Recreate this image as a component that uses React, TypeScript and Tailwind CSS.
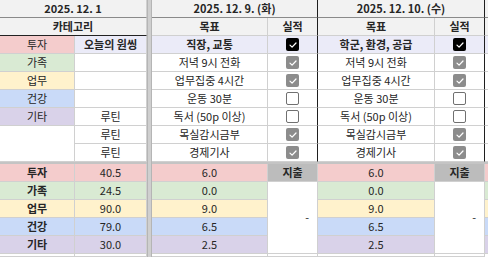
import React from 'react';

type Tone = 'pink' | 'green' | 'yellow' | 'blue' | 'purple';

const toneBg: Record<Tone, string> = {
  pink: 'bg-[#f4cccc]',
  green: 'bg-[#d9ead3]',
  yellow: 'bg-[#fff2cc]',
  blue: 'bg-[#c9daf8]',
  purple: 'bg-[#d9d2e9]',
};

const categories: { label: string; tone: Tone; total: string }[] = [
  { label: '투자', tone: 'pink', total: '40.5' },
  { label: '가족', tone: 'green', total: '24.5' },
  { label: '업무', tone: 'yellow', total: '90.0' },
  { label: '건강', tone: 'blue', total: '79.0' },
  { label: '기타', tone: 'purple', total: '30.0' },
];

const tasks: { name: string; done: boolean }[] = [
  { name: '저녁 9시 전화', done: true },
  { name: '업무집중 4시간', done: true },
  { name: '운동 30분', done: false },
  { name: '독서 (50p 이상)', done: false },
  { name: '목실감시금부', done: true },
  { name: '경제기사', done: true },
];

const dayValues = ['6.0', '0.0', '9.0', '6.5', '2.5'];

const rows = 'grid grid-rows-[18px_18px_repeat(7,18px)_2px_repeat(5,18px)_1fr] h-[257px]';
const cell = 'flex items-center justify-center border-r border-b border-[#d0d0d0] text-[11px] leading-none';

function Check({ kind }: { kind: 'black' | 'gray' | 'empty' }) {
  if (kind === 'empty') {
    return <span className="w-[13px] h-[13px] rounded-[2px] border-[1.5px] border-[#707070] bg-white" />;
  }
  return (
    <span
      className={`w-[13px] h-[13px] rounded-[2px] flex items-center justify-center ${
        kind === 'black' ? 'bg-black' : 'bg-[#8c8c8c]'
      }`}
    >
      <svg viewBox="0 0 12 12" className="w-[10px] h-[10px]">
        <path d="M2.4 6.2 L4.9 8.6 L9.6 3.6" stroke="white" strokeWidth="1.5" fill="none" strokeLinecap="round" strokeLinejoin="round" />
      </svg>
    </span>
  );
}

function LeftBlock() {
  return (
    <div className={`${rows} grid-cols-[75px_72px] w-[147px] shrink-0`}>
      <div className={`${cell} col-span-2 bg-[#f2f2f2] font-bold border-b-[#8a8a8a]`}>2025. 12. 1</div>
      <div className={`${cell} col-span-2 bg-[#f2f2f2] font-bold border-b-[#222]`}>카테고리</div>

      <div className={`${cell} ${toneBg.pink}`}>투자</div>
      <div className={`${cell} bg-[#ebebf8] font-semibold`}>오늘의 원씽</div>
      <div className={`${cell} ${toneBg.green}`}>가족</div>
      <div className={`${cell} bg-white`} />
      <div className={`${cell} ${toneBg.yellow}`}>업무</div>
      <div className={`${cell} bg-white`} />
      <div className={`${cell} ${toneBg.blue}`}>건강</div>
      <div className={`${cell} bg-white`} />
      <div className={`${cell} ${toneBg.purple}`}>기타</div>
      <div className={`${cell} bg-white`}>루틴</div>
      <div className={`${cell} row-span-2 bg-white`} />
      <div className={`${cell} bg-white`}>루틴</div>
      <div className={`${cell} bg-white`}>루틴</div>

      <div className="col-span-2 bg-[#c4c4c4]" />

      {categories.map((c) => (
        <React.Fragment key={c.label}>
          <div className={`${cell} ${toneBg[c.tone]} font-bold`}>{c.label}</div>
          <div className={`${cell} ${toneBg[c.tone]}`}>{c.total}</div>
        </React.Fragment>
      ))}

      <div className={`${cell} bg-white`} />
      <div className={`${cell} bg-white`} />
    </div>
  );
}

function DayBlock({ date, goal, wide }: { date: string; goal: string; wide?: boolean }) {
  const dark = 'border-r-[#1f1f1f]';
  return (
    <div className={`${rows} ${wide ? 'grid-cols-[117px_50px] w-[167px]' : 'grid-cols-[116px_50px] w-[166px]'} shrink-0`}>
      <div className={`${cell} col-span-2 bg-[#f2f2f2] font-bold border-b-[#8a8a8a] ${dark}`}>{date}</div>
      <div className={`${cell} bg-[#f2f2f2] font-bold`}>목표</div>
      <div className={`${cell} bg-[#f2f2f2] font-bold ${dark}`}>실적</div>

      <div className={`${cell} bg-[#ebebf8] font-bold`}>{goal}</div>
      <div className={`${cell} bg-[#ebebf8] ${dark}`}>
        <Check kind="black" />
      </div>

      {tasks.map((t) => (
        <React.Fragment key={t.name}>
          <div className={`${cell} bg-white`}>{t.name}</div>
          <div className={`${cell} bg-white ${dark}`}>
            <Check kind={t.done ? 'gray' : 'empty'} />
          </div>
        </React.Fragment>
      ))}

      <div className="col-span-2 bg-[#c4c4c4]" />

      <div className={`${cell} ${toneBg.pink}`}>{dayValues[0]}</div>
      <div className={`${cell} bg-[#bcbcbc] font-semibold`}>지출</div>

      <div className={`${cell} ${toneBg.green}`}>{dayValues[1]}</div>
      <div className={`${cell} row-span-4 bg-white !justify-end pr-[8px]`}>-</div>
      <div className={`${cell} ${toneBg.yellow}`}>{dayValues[2]}</div>
      <div className={`${cell} ${toneBg.blue}`}>{dayValues[3]}</div>
      <div className={`${cell} ${toneBg.purple}`}>{dayValues[4]}</div>

      <div className={`${cell} bg-white`} />
      <div className={`${cell} bg-white`} />
    </div>
  );
}

function Sliver() {
  return (
    <div className={`${rows} grid-cols-1 flex-1`}>
      <div className="bg-[#f2f2f2] border-b border-[#8a8a8a]" />
      <div className="bg-[#f2f2f2] border-b border-[#d0d0d0]" />
      <div className="bg-[#ebebf8] border-b border-[#d0d0d0]" />
      {tasks.map((t) => (
        <div key={t.name} className="bg-white border-b border-[#d0d0d0]" />
      ))}
      <div className="bg-[#c4c4c4]" />
      {categories.map((c) => (
        <div key={c.label} className={`${toneBg[c.tone]} border-b border-[#d0d0d0]`} />
      ))}
      <div className="bg-white" />
    </div>
  );
}

export default function App() {
  return (
    <div className="w-[488px] h-[257px] overflow-hidden bg-white flex text-[#262626] font-['Noto_Sans_CJK_KR','Noto_Sans',sans-serif]">
      <LeftBlock />
      <div className="w-[5px] shrink-0 bg-[#cfcfcf] border-x border-[#b5b5b5]" />
      <DayBlock date="2025. 12. 9. (화)" goal="직장, 교통" />
      <DayBlock date="2025. 12. 10. (수)" goal="학군, 환경, 공급" wide />
      <Sliver />
    </div>
  );
}
